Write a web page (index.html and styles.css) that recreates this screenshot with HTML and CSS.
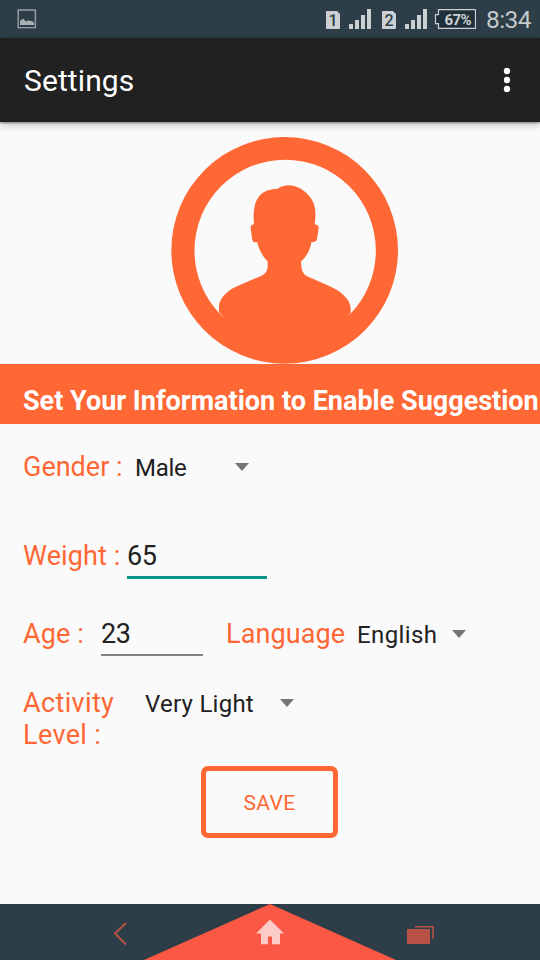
FILE: index.html
```html
<!DOCTYPE html>
<html lang="en">
<head>
<meta charset="utf-8">
<title>Settings</title>
<link rel="stylesheet" href="styles.css">
</head>
<body>
<div class="phone">
  <header class="status">
    <svg class="photo" width="20" height="20" viewBox="0 0 20 20"><path fill="none" stroke="#96a0a5" stroke-width="1.4" d="M1.2 1h17.2v17.6H1.2z"/><path fill="#aab0b3" d="M3 16V12l3-2.500 3 3 2.500-1.200 2 1L15 12l2 2v2z"/></svg>
    <svg class="signals" width="156" height="38" viewBox="0 0 156 38">
      <g fill="#ccd0d2">
        <path d="M7 11h10l3 3v14q0 1-1 1H7q-1 0-1-1V12q0-1 1-1zM63 11h10l3 3v14q0 1-1 1H63q-1 0-1-1V12q0-1 1-1z"/>
        <path d="M29 24h4v5h-4zM35 20h4v9h-4zM41 15h4v14h-4zM47 9h4v20h-4zM85 24h4v5h-4zM91 20h4v9h-4zM97 15h4v14h-4zM103 9h4v20h-4z"/>
      </g>
      <path fill="#20303a" stroke="#ccd0d2" stroke-width="1.2" d="M118.500 9.600h37v18.800h-37v-4.800h-3v-9h3z"/>
      <text class="sim" x="8.5" y="26">1</text>
      <text class="sim" x="64.5" y="26">2</text>
      <text class="percent" x="124.500" y="25" textLength="27">67%</text>
    </svg>
    <span class="clock">8:34</span>
  </header>
  <div class="appbar">
    <h1>Settings</h1>
    <svg width="8" height="26" viewBox="0 0 8 26" fill="#fff"><circle cx="4" cy="4" r="3.200"/><circle cx="4" cy="13" r="3.200"/><circle cx="4" cy="22" r="3.200"/></svg>
  </div>
  <main>
    <div class="hero">
      <svg width="250" height="242" viewBox="0 0 750 726">
        <g fill="#ff6734">
          <path fill-rule="evenodd" d="M374 27a340 340 0 1 1 0 680a340 340 0 1 1 0-680zM375.500 95a272 273 0 1 0 0 546a272 273 0 1 0 0-546z"/>
          <path d="M177 552V535C178 510 205 484 238 472L305 443Q323 434 323 415V400C308 386 295 362 292 343H284Q277 342 276 331L272 300Q271 291 282 289C276 230 291 182 352 183C377 164 414 171 439 195C466 221 470 246 464 289Q477 291 476 300L471 333Q469 343 454 343C452 364 440 385 423 400L424 415Q425 433 438 443L503 472C541 488 572 514 572 542V555C540 600 480 670 375 670C270 670 220 600 177 552z"/>
        </g>
      </svg>
    </div>
    <h2 class="banner">Set Your Information to Enable Suggestion</h2>
    <form>
      <div class="row gender"><label>Gender :</label><span class="choice">Male</span><i class="caret"></i></div>
      <div class="row weight"><label>Weight :</label><span class="field focused">65</span></div>
      <div class="row age"><label>Age :</label><span class="field">23</span><label class="language">Language</label><span class="choice">English</span><i class="caret"></i></div>
      <div class="row activity"><label>Activity Level :</label><span class="choice">Very Light</span><i class="caret"></i></div>
      <button type="button">SAVE</button>
    </form>
  </main>
  <nav>
    <svg width="540" height="56" viewBox="0 0 540 56">
      <path fill="#fa5845" d="M270 0L396 56H144z"/>
      <path fill="none" stroke="#b85246" stroke-width="2" d="M126 19L115 29.500L126 40.500"/>
      <path fill="#fccbc7" d="M270 15.500L284 29.500H280V40.300H272V32.500H268V40.300H261V29.500H256z"/>
      <path fill="#b85246" d="M407 25h23v15h-23z"/>
      <path fill="none" stroke="#b85246" stroke-width="1.500" d="M415 22.700h18v12.300"/>
    </svg>
  </nav>
</div>
</body>
</html>
```
FILE: styles.css
```css
* { box-sizing: border-box; }
body { margin: 0; font-family: Roboto, "Liberation Sans", sans-serif; background: #fafafa; }
svg { display: block; flex: none; }
.phone { width: 540px; height: 960px; display: flex; flex-direction: column; overflow: hidden; }

.status { flex: none; height: 38px; display: flex; align-items: center; padding: 0 8px 0 17px; background: #2d3e48; }
.signals { margin-left: auto; }
.sim { font-size: 16px; font-weight: 500; fill: #2d3e48; }
.percent { font-size: 15px; font-weight: 700; fill: #ccd0d2; }
.clock { width: 46px; margin-left: 10px; font-size: 24.5px; line-height: 38px; letter-spacing: -0.6px; color: #c4c9cc; white-space: nowrap; padding-top: 2px; }

.appbar { flex: none; height: 84px; display: flex; align-items: center; justify-content: space-between; padding: 0 29px 0 24px; background: #212121; box-shadow: 0 1px 2px rgba(0, 0, 0, .4), 0 3px 8px rgba(0, 0, 0, .22); position: relative; }
h1 { margin: 0; padding-top: 2px; font-size: 30px; line-height: 36px; letter-spacing: 0.1px; font-weight: 400; color: #fff; }

main { flex: 1; }
.hero { height: 242px; padding: 3px 0 0 160px; overflow: hidden; }
.hero svg { margin-top: 3px; }
.banner { margin: 0; height: 60px; padding: 21px 0 0 23px; background: #ff6734; color: #fff; font-size: 27px; line-height: 32px; font-weight: 700; white-space: nowrap; }

form { display: flex; flex-direction: column; padding: 27px 0 0 23px; }
.row { display: flex; align-items: baseline; font-size: 27px; line-height: 32px; }
label { color: #ff6734; letter-spacing: 0.1px; }
.choice { font-size: 24px; color: #212121; white-space: nowrap; }
.field { height: 38px; color: #212121; letter-spacing: -0.3px; border-bottom: 2px solid #808080; }
.focused { height: 39px; border-bottom: 3px solid #009688; }
.caret { align-self: flex-start; margin-top: 12px; border: solid transparent; border-width: 8px 7px 0; border-top-color: #757575; }

.gender { height: 89px; }
.gender label { width: 112px; letter-spacing: 0; }
.gender .choice { width: 100px; letter-spacing: -0.3px; }
.weight { height: 78px; }
.weight label { width: 104px; }
.weight .field { width: 140px; }
.age { height: 69px; }
.age label { width: 78px; }
.age .field { width: 102px; }
.age .language { width: 131px; margin-left: 23px; }
.age .choice { width: 95px; letter-spacing: 0.4px; }
.activity { height: 79px; }
.activity label { width: 122px; padding-right: 20px; letter-spacing: 0.35px; }
.activity .choice { width: 135px; letter-spacing: 0.25px; }
button { width: 137px; height: 72px; margin-left: 178px; padding: 1px 0 0; border: 5px solid #ff6734; border-radius: 7px; background: transparent; color: #ff6734; font: 400 21px/24px Roboto, sans-serif; letter-spacing: 0.4px; }

nav { flex: none; height: 56px; background: #2d3e48; }
```
